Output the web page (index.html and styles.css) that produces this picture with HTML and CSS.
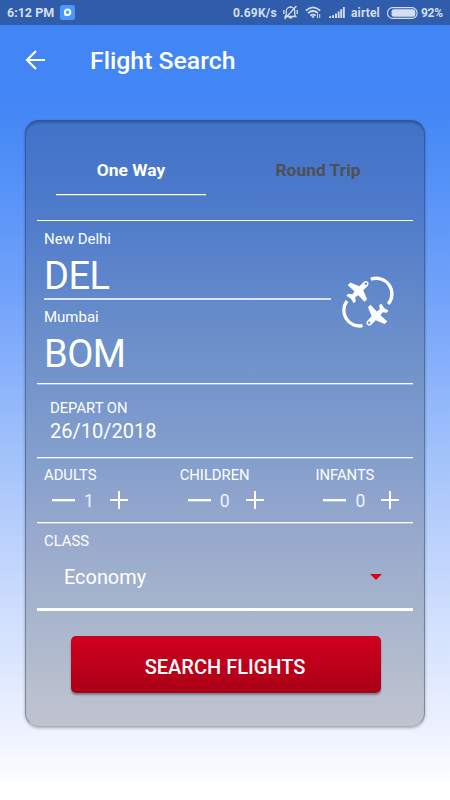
FILE: index.html
```html
<!DOCTYPE html>
<html lang="en">
<head>
<meta charset="utf-8">
<title>Flight Search</title>
<link rel="stylesheet" href="styles.css">
</head>
<body>
<div class="status">
  <span class="time">6:12 PM</span>
  <svg class="app" width="15" height="15" viewBox="0 0 15 15"><rect width="15" height="15" rx="2.5" fill="#4a98fb"/><circle cx="7.6" cy="7.2" r="2.7" fill="none" stroke="#fff" stroke-width="2"/><path d="M4 8l1 3.3 3-.5z" fill="#fff"/></svg>
  <span class="speed">0.69K/s</span>
  <svg class="bell" width="15" height="15" viewBox="0 0 15 15" fill="none" stroke="#d5def0" stroke-width="1.3"><path d="M3.2 10.2V6.5a4.3 4.3 0 0 1 8.6 0v3.7l1 1.3H2.2zM6 12.2q1.5 2 3 0M7.500 2.200V1M1.500 14L13.500 1M.8 5v4M14.200 5v4"/></svg>
  <svg class="wifi" width="17" height="13" viewBox="0 0 17 13" fill="none" stroke="#d5def0" stroke-width="1.7"><path d="M.8 4.600Q8-2 15.200 4.600M3 7.200Q8 2.800 13 7.200M5.300 9.600Q8 7.500 10.700 9.600"/><path d="M6.300 10.500L8 12.300l1.700-1.800Q8 9.500 6.300 10.500z" fill="#d5def0" stroke="none"/><path d="M12.500 8v4M14.700 8v4" stroke-width="1"/></svg>
  <svg class="signal" width="16" height="11" viewBox="0 0 16 11" fill="#d5def0"><path d="M0 11V9.500L2 9v2zM3 11V8.500L5 8v3zM6 11V6.500h2V11zM8.800 11V4.500h1.800V11zM11.300 11V2.300h1.800V11zM13.900 11V0h1.900v11z"/></svg>
  <span class="carrier">airtel</span>
  <svg class="battery" width="31" height="12" viewBox="0 0 31 12"><rect x=".6" y=".6" width="29.400" height="10.800" rx="5" fill="none" stroke="#d5def0" stroke-width="1.100"/><rect x="4.500" y="2.200" width="23.800" height="7.600" rx="2.500" fill="#d5def0"/></svg>
  <span class="percent">92%</span>
</div>
<header class="bar">
  <svg class="back" width="21" height="20" viewBox="0 0 21 20" fill="none" stroke="#fff" stroke-width="2.2"><path d="M20 10H1.500M11 1L2 10l9 9"/></svg>
  <h1>Flight Search</h1>
</header>
<main class="card">
  <nav class="tabs">
    <div class="tab active">One Way</div>
    <div class="tab">Round Trip</div>
  </nav>
  <section class="route">
    <div class="places">
      <div class="place from"><div class="city">New Delhi</div><div class="code">DEL</div></div>
      <div class="place"><div class="city">Mumbai</div><div class="code">BOM</div></div>
    </div>
    <svg class="swap" width="52" height="52" viewBox="0 0 52 52">
      <defs><path id="plane" d="M0-13.800c1.900 0 2.800 1.400 2.800 3.300V-4.700L11.800-1V2.700L2.700 2.300 2 6 5.200 8.300V11.200L0 10-5.200 11.200V8.300L-2 6-2.700 2.300-11.800 2.700V-1L-2.800-4.700V-10.500C-2.800-12.400-1.900-13.800 0-13.800z"/></defs>
      <g fill="none" stroke="#fff" stroke-width="3.300"><path d="M27.800 3.300A15.600 15.600 0 0 1 45.200 28"/><path d="M19.500 49.700A15.600 15.600 0 0 1 4 25"/></g>
      <g fill="#fff"><use href="#plane" transform="translate(15 15.600) rotate(45)"/><use href="#plane" transform="translate(34 39) rotate(225)"/></g>
      <g fill="#5e87ca"><circle cx="22.800" cy="7.800" r="1.200"/><circle cx="26.200" cy="46.800" r="1.200"/></g>
    </svg>
  </section>
  <section class="depart"><div class="label">DEPART ON</div><div class="date">26/10/2018</div></section>
  <section class="people">
    <div class="group"><div class="label">ADULTS</div><div class="stepper"><i class="minus"></i><span>1</span><i class="plus"></i></div></div>
    <div class="group"><div class="label">CHILDREN</div><div class="stepper"><i class="minus"></i><span>0</span><i class="plus"></i></div></div>
    <div class="group"><div class="label">INFANTS</div><div class="stepper"><i class="minus"></i><span>0</span><i class="plus"></i></div></div>
  </section>
  <section class="class">
    <div class="label">CLASS</div>
    <div class="select"><span>Economy</span><svg width="12" height="6" viewBox="0 0 12 6"><path d="M0 0h12L6 6z" fill="#dc0010"/></svg></div>
  </section>
  <button class="search">SEARCH FLIGHTS</button>
</main>
</body>
</html>
```
FILE: styles.css
```css
* { box-sizing: border-box; }
body {
  margin: 0;
  height: 800px;
  overflow: hidden;
  font-family: Roboto, sans-serif;
  color: #fff;
  background: linear-gradient(#4285f4 0, #4285f4 95px, #488af6 130px, #73a3fa 300px, #a1c1fb 450px, #cbdcfc 600px, #ecf1fe 725px, #fff 790px);
}
.status {
  height: 25px;
  display: flex;
  align-items: center;
  padding: 0 7px;
  background: #2f5dab;
  color: #d5def0;
  font-size: 12px;
  font-weight: 700;
  white-space: nowrap;
}
.time { width: 53px; font-size: 12.500px; }
.speed { width: 50px; margin-left: 158px; letter-spacing: .2px; }
.app, .bell, .wifi, .signal, .battery { flex: none; }
.wifi { margin-left: 7px; }
.signal { margin-left: 7px; }
.carrier { width: 29px; margin-left: 6px; letter-spacing: .15px; }
.battery { margin-left: 7px; }
.percent { margin-left: 3px; font-size: 12px; letter-spacing: -.3px; }
.bar { height: 72px; display: flex; align-items: center; padding-left: 25px; }
.bar h1 { margin: -1px 0 0 44px; font-size: 24.800px; line-height: 30px; font-weight: 500; }
.back { margin-top: -2px; }
.card {
  width: 400px;
  height: 607px;
  margin: 23px 25px 0;
  padding: 0 11px;
  border: 1px solid rgba(30, 50, 90, .38);
  border-top: 2px solid rgba(30, 55, 110, .45);
  border-bottom-color: rgba(30, 50, 90, .15);
  border-radius: 14px;
  background: linear-gradient(#4072ca, #507ccb 100px, #6e91ca 230px, #849fcd 340px, #94a6cd 398px, #a5b4cd 485px, #c1c4cf);
  background-origin: border-box;
  box-shadow: 0 1px 3px rgba(0, 0, 0, .3), inset 0 2px 1px rgba(30, 60, 120, .18);
}
.tabs { height: 98px; display: flex; padding: 24px 19px 0; }
.tab { flex: none; width: 150px; height: 49px; text-align: center; font-size: 17.400px; line-height: 49px; font-weight: 700; color: #4e5055; }
.tab + .tab { margin-left: 37px; }
.tab.active { color: #fff; border-bottom: 1.500px solid #fff; box-shadow: 0 .5px 0 rgba(255, 255, 255, .5); }
.route { height: 164px; display: flex; border: solid #fff; border-width: 1px 0; padding-left: 7px; }
.route, .depart, .people { box-shadow: 0 .6px 0 rgba(255, 255, 255, .55); }
.places { width: 287px; }
.place.from { height: 79px; border-bottom: 2px solid #dce4f4; }
.city { padding-top: 8px; font-size: 15px; line-height: 20px; }
.place:not(.from) .city { margin-top: -1px; }
.code { font-size: 38px; line-height: 44px; margin-top: 5px; letter-spacing: -.5px; }
.swap { margin: 55px 0 0 12px; overflow: visible; }
.depart { height: 74px; padding: 15px 13px 0; border-bottom: 1px solid #fff; }
.label { font-size: 14.800px; line-height: 18px; }
.date { font-size: 20px; line-height: 26px; margin-top: 1px; }
.people { height: 65px; display: flex; border-bottom: 1px solid #fff; padding: 8px 0 0 7px; }
.group { width: 135.700px; flex: none; }
.stepper { display: flex; align-items: center; height: 20px; margin-top: 6px; padding-left: 8px; font-size: 17.500px; }
.stepper span { width: 10px; margin: 0 16px 0 9px; padding-top: 2px; color: #f1f4fa; }
.minus { width: 23px; height: 2px; background: #fff; box-shadow: 0 1px 0 rgba(255, 255, 255, .35); }
.plus { width: 18px; height: 18px; background: linear-gradient(#fff, #fff) center / 18px 2px no-repeat, linear-gradient(#fff, #fff) center / 2px 18px no-repeat; box-shadow: none; }
.class { height: 88px; padding: 9px 7px 0; border-bottom: 3px solid #fff; }
.select { display: flex; align-items: center; justify-content: space-between; height: 30px; margin-top: 12px; padding: 0 24px 0 20px; font-size: 19.900px; }
.search {
  display: block;
  width: 310px;
  height: 57px;
  margin: 25px 0 0 34px;
  border: 0;
  border-radius: 5px;
  color: #fff;
  font: 500 20px Roboto, sans-serif;
  padding: 4px 2px 0 0;
  background: linear-gradient(#d1001e, #a90017);
  box-shadow: 0 2px 2px rgba(50, 60, 80, .5);
}
```
